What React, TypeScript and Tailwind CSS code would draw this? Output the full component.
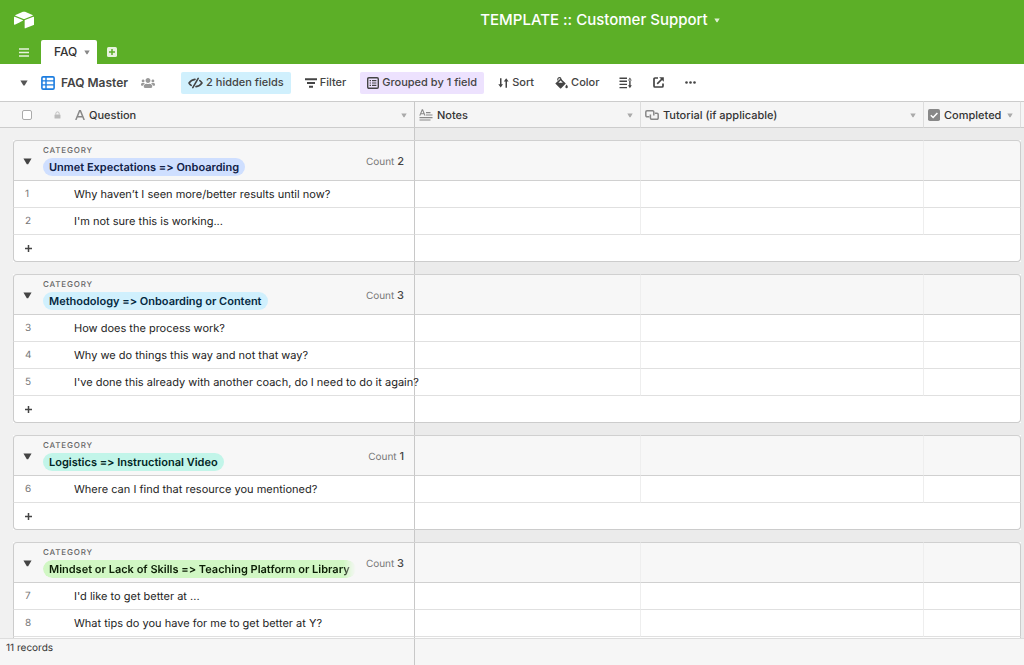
import React from 'react';
import { SiAirtable } from 'react-icons/si';
import { FaUsers } from 'react-icons/fa';
import clsx from 'clsx';

type Row = { id: number; question: string };
type Group = { name: string; pill: string; count: number; rows: Row[] };

const groups: Group[] = [
  {
    name: 'Unmet Expectations => Onboarding',
    pill: 'bg-[#cfdfff] text-[#102046]',
    count: 2,
    rows: [
      { id: 1, question: 'Why haven’t I seen more/better results until now?' },
      { id: 2, question: "I'm not sure this is working..." },
    ],
  },
  {
    name: 'Methodology => Onboarding or Content',
    pill: 'bg-[#d0f0fd] text-[#04283f]',
    count: 3,
    rows: [
      { id: 3, question: 'How does the process work?' },
      { id: 4, question: 'Why we do things this way and not that way?' },
      { id: 5, question: "I've done this already with another coach, do I need to do it again?" },
    ],
  },
  {
    name: 'Logistics => Instructional Video',
    pill: 'bg-[#c2f5e9] text-[#012524]',
    count: 1,
    rows: [{ id: 6, question: 'Where can I find that resource you mentioned?' }],
  },
  {
    name: 'Mindset or Lack of Skills => Teaching Platform or Library',
    pill: 'bg-[#d1f7c4] text-[#0b1d05] [mask-image:linear-gradient(to_right,black_96%,transparent)]',
    count: 3,
    rows: [
      { id: 7, question: "I'd like to get better at ..." },
      { id: 8, question: 'What tips do you have for me to get better at Y?' },
    ],
  },
];

const Caret = ({ className }: { className?: string }) => (
  <svg viewBox="0 0 8 6" className={clsx('shrink-0', className)} fill="currentColor" aria-hidden="true">
    <path d="M0.4 0.4h7.2L4.6 5.4h-1.2z" />
  </svg>
);

const GridIcon = () => (
  <svg viewBox="0 0 14 14" className="w-[14px] h-[14px]" fill="none" stroke="#1c7de0" aria-hidden="true">
    <rect x="0.9" y="0.9" width="12.2" height="12.2" rx="1.2" strokeWidth="1.6" />
    <path d="M1 4.9h12M1 8.9h12M5 1v12" strokeWidth="1.4" />
  </svg>
);

const HiddenIcon = () => (
  <svg viewBox="0 0 15 12" className="w-[15px] h-3" fill="none" stroke="currentColor" strokeWidth="1.6" strokeLinecap="round" strokeLinejoin="round" aria-hidden="true">
    <path d="M10.2 1.4L4.8 10.6" />
    <path d="M7 2.4C4.6 2.7 2.4 4 1 6c0.6 1 1.3 1.7 2.2 2.3" />
    <path d="M11.8 3.7C12.7 4.3 13.4 5 14 6c-1.4 2-3.4 3.3-6 3.6" />
  </svg>
);

const FilterIcon = () => (
  <svg viewBox="0 0 12 10" className="w-3 h-[10px]" stroke="currentColor" strokeWidth="1.9" aria-hidden="true">
    <path d="M0 1.2h12M2 5h8M4 8.8h4" />
  </svg>
);

const GroupIcon = () => (
  <svg viewBox="0 0 12 12" className="w-3 h-3" fill="none" stroke="currentColor" aria-hidden="true">
    <rect x="0.7" y="0.7" width="10.6" height="10.6" rx="1.2" strokeWidth="1.4" />
    <path d="M2.6 3.6h1.4M5 3.6h4.4M2.6 6h1.4M5 6h4.4M2.6 8.4h1.4M5 8.4h4.4" strokeWidth="1.2" />
  </svg>
);

const SortIcon = () => (
  <svg viewBox="0 0 11 10" className="w-[11px] h-[10px]" fill="currentColor" aria-hidden="true">
    <path d="M2 0.2h1.5v6H5L2.7 9.6 0.3 6.2H2z" />
    <path d="M7.5 9.8H9V3.6h1.6L8.2 0.2 5.8 3.6h1.7z" />
  </svg>
);

const PaintIcon = () => (
  <svg viewBox="0 0 13 12" className="w-[13px] h-3" fill="currentColor" aria-hidden="true">
    <path d="M0.3 6.6L5.6 1.4l5.2 5.2-4.6 4.6a0.8 0.8 0 0 1-1.2 0z" />
    <path d="M2.8 3.6V2.2a1.6 1.6 0 0 1 3.2 0v2" fill="none" stroke="currentColor" strokeWidth="1.1" />
    <path d="M3.4 5.8L5.6 3.6l2.2 2.2z" fill="#fff" />
    <path d="M11.6 7.6c0.7 1 1.2 1.7 1.2 2.4a1.2 1.2 0 0 1-2.4 0c0-0.7 0.5-1.4 1.2-2.4z" />
  </svg>
);

const HeightIcon = () => (
  <svg viewBox="0 0 13 12" className="w-[13px] h-3" aria-hidden="true">
    <path d="M0.5 1.2h7.5M0.5 4.2h7.5M0.5 7.4h7.5M0.5 10.6h7.5" stroke="currentColor" strokeWidth="1.4" />
    <path d="M10.2 2.5v7h1.4v-7zM9 3.6L10.9 0.6l1.9 3zM9 8.2l1.9 3 1.9-3z" fill="currentColor" />
  </svg>
);

const ShareIcon = () => (
  <svg viewBox="0 0 11 11" className="w-[11px] h-[11px]" fill="none" stroke="currentColor" strokeWidth="1.7" aria-hidden="true">
    <path d="M5 1H2a1 1 0 0 0-1 1v7a1 1 0 0 0 1 1h7a1 1 0 0 0 1-1V6.4" />
    <path d="M4.2 6.8L9 2" />
    <path d="M6.2 0.2h4.6v4.6z" fill="currentColor" stroke="none" />
  </svg>
);

const DotsIcon = () => (
  <svg viewBox="0 0 11 3" className="w-[11px] h-[3px]" fill="currentColor" aria-hidden="true">
    <circle cx="1.5" cy="1.5" r="1.3" />
    <circle cx="5.5" cy="1.5" r="1.3" />
    <circle cx="9.5" cy="1.5" r="1.3" />
  </svg>
);

const LockIcon = () => (
  <svg viewBox="0 0 8 9" className="w-[7px] h-2" aria-hidden="true">
    <rect x="0.6" y="4" width="6.8" height="4.6" rx="0.6" fill="#bbb" />
    <path d="M2.1 4V2.8a1.9 1.9 0 0 1 3.8 0V4" fill="none" stroke="#bbb" strokeWidth="1.1" />
  </svg>
);

const TextFieldIcon = () => (
  <svg viewBox="0 0 10 10" className="w-[10px] h-[10px]" fill="none" stroke="#888" strokeWidth="1.5" aria-hidden="true">
    <path d="M0.8 10L4.6 0.7h0.8L9.2 10M2.4 6.8h5.2" />
  </svg>
);

const LongTextIcon = () => (
  <svg viewBox="0 0 14 12" className="w-[14px] h-3" fill="none" stroke="#888" strokeWidth="1.1" aria-hidden="true">
    <path d="M0.8 6.6L3.2 0.8h0.4L6 6.6M1.8 4.7H5" />
    <path d="M7 3.6h4.5M7 6h6.5M0.5 8.6h13M0.5 11h11" />
  </svg>
);

const LinkFieldIcon = () => (
  <svg viewBox="0 0 14 10" className="w-[14px] h-[10px]" fill="none" stroke="#888" strokeWidth="1.5" aria-hidden="true">
    <path d="M4.4 6.8H2a1.2 1.2 0 0 1-1.2-1.2V2A1.2 1.2 0 0 1 2 0.8h5.6A1.2 1.2 0 0 1 8.8 2v3.4" />
    <path d="M9.8 3.2H12a1.2 1.2 0 0 1 1.2 1.2V8A1.2 1.2 0 0 1 12 9.2H6.6A1.2 1.2 0 0 1 5.4 8V4.6" />
  </svg>
);

const CheckFieldIcon = () => (
  <svg viewBox="0 0 12 12" className="w-3 h-3" aria-hidden="true">
    <rect width="12" height="12" rx="1.8" fill="#888" />
    <path d="M2.8 6.2l2.3 2.3 4.3-4.6" fill="none" stroke="#fff" strokeWidth="1.5" />
  </svg>
);

const PlusIcon = () => (
  <svg viewBox="0 0 7 7" className="w-[7px] h-[7px]" stroke="#444" strokeWidth="1.5" aria-hidden="true">
    <path d="M3.5 0v7M0 3.5h7" />
  </svg>
);

const TopBar = () => (
  <header className="bg-[#5caf27] text-white">
    <div className="flex items-center h-10">
      <a href="#home" aria-label="Home" className="w-44 pl-[14px]">
        <SiAirtable className="w-5 h-5" />
      </a>
      <h1 className="flex-1 text-center">
        <button className="inline-flex items-center gap-[6px] text-[15px] font-medium">
          TEMPLATE :: Customer Support
          <Caret className="w-[6px] h-[5px] opacity-80" />
        </button>
      </h1>
    </div>
    <nav className="flex items-stretch h-6">
      <button aria-label="All tables" className="w-[41px] pl-[19px]">
        <svg viewBox="0 0 10 9" className="w-[10px] h-[9px]" stroke="#fff" strokeOpacity="0.85" strokeWidth="1.3" aria-hidden="true">
          <path d="M0 1h10M0 4.5h10M0 8h10" />
        </svg>
      </button>
      <button className="flex items-center gap-[7px] pl-[13px] pr-[7px] bg-white text-[#333] text-[12px] font-medium rounded-t-xs">
        FAQ
        <Caret className="w-[6px] h-[5px] text-[#888]" />
      </button>
      <button aria-label="Add table" className="px-[10px]">
        <svg viewBox="0 0 10 10" className="w-[10px] h-[10px]" aria-hidden="true">
          <rect width="10" height="10" rx="1.6" fill="#fff" fillOpacity="0.85" />
          <path d="M5 2v6M2 5h6" stroke="#5caf27" strokeWidth="1.5" />
        </svg>
      </button>
    </nav>
  </header>
);

const ToolButton = ({ icon, children, className }: { icon: React.ReactNode; children: React.ReactNode; className?: string }) => (
  <button className={clsx('flex items-center gap-[3px] h-[22px] px-[7px] rounded-xs whitespace-nowrap', className)}>
    {icon}
    {children}
  </button>
);

const Toolbar = () => (
  <div className="flex items-center h-[37px] bg-white text-[11px] font-medium text-[#444]">
    <button className="flex items-center pl-5">
      <Caret className="w-2 h-[6px] text-[#555] mr-[13px]" />
      <GridIcon />
      <span className="ml-[6px] text-[12px] font-semibold">FAQ Master</span>
    </button>
    <button aria-label="Collaborators" className="ml-[13px] mr-[26px] text-[#999]">
      <FaUsers className="w-[14px] h-[14px]" />
    </button>
    <div className="flex items-center gap-[7px]">
      <ToolButton icon={<HiddenIcon />} className="bg-[#d0f0fd]">2 hidden fields</ToolButton>
      <ToolButton icon={<FilterIcon />}>Filter</ToolButton>
      <ToolButton icon={<GroupIcon />} className="bg-[#ede2fe]">Grouped by 1 field</ToolButton>
      <ToolButton icon={<SortIcon />}>Sort</ToolButton>
      <ToolButton icon={<PaintIcon />}>Color</ToolButton>
    </div>
    <div className="flex items-center gap-[21px] ml-[13px]">
      <button aria-label="Row height"><HeightIcon /></button>
      <button aria-label="Share view"><ShareIcon /></button>
      <button aria-label="More"><DotsIcon /></button>
    </div>
  </div>
);

const FieldHead = ({ icon, label }: { icon: React.ReactNode; label: string }) => (
  <div className="flex items-center gap-1 pl-1 pr-[7px] pt-px">
    {icon}
    <span className="whitespace-nowrap">{label}</span>
    <button aria-label={`${label} field menu`} className="ml-auto">
      <Caret className="w-[6px] h-[5px] text-[#aaa]" />
    </button>
  </div>
);

const headCell = 'sticky top-0 h-[27px] p-0 bg-[#f5f5f5] border-y border-[#ccc] font-medium text-left';
const light = 'border-r border-r-[#eee]';
const split = 'border-r border-r-[#c8c8c8]';

const Spacer = () => (
  <tr className="h-3">
    <td colSpan={3} className={clsx('p-0', split)} />
    <td colSpan={4} className="p-0" />
  </tr>
);

const GroupBody = ({ group }: { group: Group }) => (
  <tbody>
    <tr className="h-[41px]">
      <td className="p-0" />
      <th colSpan={2} scope="rowgroup" className={clsx('p-0 bg-[#f7f7f7] border-y border-l border-y-[#d0d0d0] border-l-[#ccc] rounded-tl-sm font-normal', split)}>
        <div className="flex items-center pl-[9px] pr-[10px] pt-px">
          <button aria-label={`Collapse ${group.name}`} className="w-5 shrink-0">
            <Caret className="w-[9px] h-[7px] text-[#444]" />
          </button>
          <div className="min-w-0 flex flex-col items-start">
            <span className="text-[8px] leading-[9px] tracking-widest font-medium text-[#666]">CATEGORY</span>
            <span className={clsx('mt-[3px] max-w-full overflow-hidden whitespace-nowrap rounded-full px-[6px] text-[11px] leading-[18px] font-semibold', group.pill)}>
              {group.name}
            </span>
          </div>
          <span className="ml-auto pl-1 shrink-0 text-[10px] text-[#777]">
            Count <span className="text-[11px] font-medium text-[#444]">{group.count}</span>
          </span>
        </div>
      </th>
      <td className={clsx('bg-[#f7f7f7] border-y border-y-[#d0d0d0]', light)} />
      <td className={clsx('bg-[#f7f7f7] border-y border-y-[#d0d0d0]', light)} />
      <td className="bg-[#f7f7f7] border-y border-r border-y-[#d0d0d0] border-r-[#ccc] rounded-tr-sm" />
      <td className="p-0" />
    </tr>
    {group.rows.map((row) => (
      <tr key={row.id} className="h-[27px]">
        <td className="p-0" />
        <td className="p-0 pl-[11px] bg-white border-b border-l border-b-[#e0e0e0] border-l-[#ccc] text-[10px] text-[#777]">{row.id}</td>
        <td className={clsx('p-0 pl-[11px] bg-white border-b border-b-[#e0e0e0] whitespace-nowrap', split)}>{row.question}</td>
        <td className={clsx('bg-white border-b border-b-[#e0e0e0]', light)} />
        <td className={clsx('bg-white border-b border-b-[#e0e0e0]', light)} />
        <td className="bg-white border-b border-r border-b-[#e0e0e0] border-r-[#ccc]" />
        <td className="p-0" />
      </tr>
    ))}
    <tr className="h-[27px]">
      <td className="p-0" />
      <td colSpan={2} className={clsx('p-0 pl-[11px] bg-white border-b border-l border-b-[#ccc] border-l-[#ccc] rounded-bl-sm', split)}>
        <button aria-label="Add record" className="block"><PlusIcon /></button>
      </td>
      <td colSpan={3} className="bg-white border-b border-r border-[#ccc] rounded-br-sm" />
      <td className="p-0" />
    </tr>
    <Spacer />
  </tbody>
);

export default function App() {
  return (
    <div className="flex flex-col h-screen overflow-hidden font-['Inter','Liberation_Sans',sans-serif] [font-feature-settings:'calt'_0] [text-rendering:geometricPrecision] text-[11px] text-[#1d1d1d]">
      <TopBar />
      <Toolbar />
      <main className="flex-1 min-h-0 overflow-hidden">
        <table className="w-full table-fixed border-separate border-spacing-0">
          <colgroup>
            <col className="w-[13px] bg-[#f1f1f1]" />
            <col className="w-[50px] bg-[#f1f1f1]" />
            <col className="w-[352px] bg-[#f1f1f1]" />
            <col className="w-[226px] bg-[#ebebeb]" />
            <col className="bg-[#ebebeb]" />
            <col className="w-[97px] bg-[#ebebeb]" />
            <col className="w-[3px] bg-[#ebebeb]" />
          </colgroup>
          <thead className="text-[#333]">
            <tr>
              <th colSpan={2} className={headCell}>
                <div className="flex items-center pl-[22px]">
                  <input type="checkbox" aria-label="Select all records" className="appearance-none w-[10px] h-[10px] bg-white border border-[#aaa] rounded-xs mr-[22px]" />
                  <LockIcon />
                </div>
              </th>
              <th scope="col" className={clsx(headCell, split)}>
                <div className="pl-2"><FieldHead icon={<TextFieldIcon />} label="Question" /></div>
              </th>
              <th scope="col" className={clsx(headCell, 'border-r border-r-[#ddd]')}>
                <FieldHead icon={<LongTextIcon />} label="Notes" />
              </th>
              <th scope="col" className={clsx(headCell, 'border-r border-r-[#ddd]')}>
                <FieldHead icon={<LinkFieldIcon />} label="Tutorial (if applicable)" />
              </th>
              <th scope="col" className={clsx(headCell, 'border-r border-r-[#ddd]')}>
                <FieldHead icon={<CheckFieldIcon />} label="Completed" />
              </th>
              <td className={headCell} />
            </tr>
          </thead>
          <tbody>
            <Spacer />
          </tbody>
          {groups.map((group) => (
            <GroupBody key={group.name} group={group} />
          ))}
        </table>
      </main>
      <footer className="flex h-[27px] shrink-0 bg-[#f6f6f6] border-t border-[#ddd] text-[10px] leading-[18px] text-[#333]">
        <div className="w-[415px] pl-[6px] border-r border-[#c8c8c8]">11 records</div>
      </footer>
    </div>
  );
}
